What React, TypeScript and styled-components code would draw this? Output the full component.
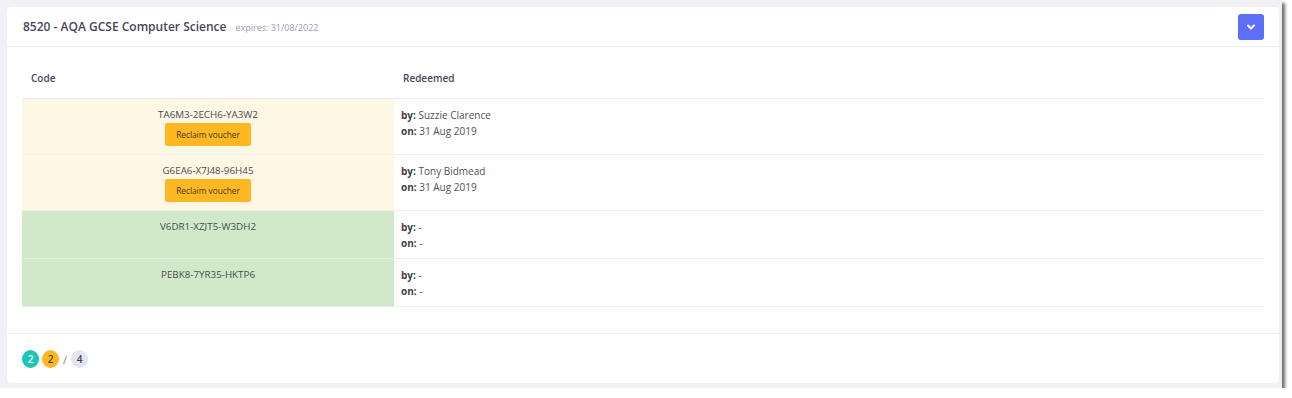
import React from 'react';
import styled, { createGlobalStyle } from 'styled-components';

const GlobalStyle = createGlobalStyle`
    html, body {
        margin: 0;
        padding: 0;
        background: #ffffff;
    }
    body {
        font-family: 'Open Sans', 'Noto Sans', Arial, sans-serif;
        color: #575962;
    }
`;

const Frame = styled.div`
    box-sizing: border-box;
    width: 1282px;
    height: 388px;
    padding: 7px 3px 5px 7px;
    background: #f0f0f6;
    box-shadow: 3px 3px 3px rgba(50, 50, 50, 0.7);
`;

const Card = styled.div`
    height: 100%;
    background: #ffffff;
    border-radius: 4px;
    display: flex;
    flex-direction: column;
`;

const CardHeader = styled.div`
    box-sizing: border-box;
    flex-shrink: 0;
    height: 40px;
    padding: 0 15px 0 16px;
    border-bottom: 1px solid #ebedf2;
    display: flex;
    align-items: center;
    justify-content: space-between;
`;

const TitleWrap = styled.div`
    display: flex;
    align-items: baseline;
    gap: 9px;
`;

const Title = styled.h3`
    margin: 0;
    font-size: 12px;
    font-weight: 600;
    color: #48465b;
`;

const Expires = styled.span`
    font-size: 9px;
    color: #9a9caf;
`;

const ToggleButton = styled.button`
    width: 26px;
    height: 26px;
    padding: 0;
    border: none;
    border-radius: 3px;
    background: #5d6ff7;
    display: flex;
    align-items: center;
    justify-content: center;
    cursor: pointer;
`;

const CardBody = styled.div`
    flex: 1;
    padding: 11px 15px 0;
`;

const Grid = styled.div`
    display: grid;
    grid-template-columns: 372px 1fr;
`;

const HeadCell = styled.div`
    padding: 12px 9px;
    line-height: 16px;
    font-size: 10px;
    font-weight: 600;
    color: #48465b;
    border-bottom: 1px solid #ebedf2;
`;

const CodeCell = styled.div<{ status: 'redeemed' | 'free' }>`
    padding: 8px 9px 8px;
    background: ${({ status }) => (status === 'redeemed' ? '#fdf7e3' : '#d1e9c8')};
    border-bottom: 1px solid ${({ status }) => (status === 'redeemed' ? '#eef0f2' : '#e3efe0')};
    display: flex;
    flex-direction: column;
    align-items: center;
    font-size: 9.8px;
    line-height: 16px;
    color: #4a4b54;
`;

const ReclaimButton = styled.button`
    height: 23px;
    padding: 0 11px;
    border: none;
    border-radius: 2px;
    background: #ffb822;
    color: #3b3720;
    font-family: inherit;
    font-size: 8.3px;
    cursor: pointer;
`;

const RedeemCell = styled.div`
    padding: 8px 7px 7px;
    border-bottom: 1px solid #ebedf2;
    font-size: 10px;
    line-height: 16px;
    color: #4f5059;
`;

const Label = styled.b`
    font-weight: 700;
    color: #3f4047;
`;

const CardFooter = styled.div`
    flex-shrink: 0;
    border-top: 1px solid #ebedf2;
    padding: 16px 15px 15px;
    display: flex;
    align-items: center;
    gap: 3px;
`;

const Badge = styled.span<{ tone: 'success' | 'warning' | 'muted' }>`
    width: 17px;
    height: 18px;
    border-radius: 50%;
    display: inline-flex;
    align-items: center;
    justify-content: center;
    font-size: 10px;
    font-weight: 600;
    background: ${({ tone }) =>
        tone === 'success' ? '#1dc5b8' : tone === 'warning' ? '#ffb822' : '#e4e5f0'};
    color: ${({ tone }) => (tone === 'success' ? '#ffffff' : '#3f4047')};
`;

const Slash = styled.span`
    font-size: 11px;
    color: #7b7e9a;
    margin: 0 1px;
`;

type Voucher = {
    code: string;
    by: string;
    on: string;
    redeemed: boolean;
};

const vouchers: Voucher[] = [
    { code: 'TA6M3-2ECH6-YA3W2', by: 'Suzzie Clarence', on: '31 Aug 2019', redeemed: true },
    { code: 'G6EA6-X7J48-96H45', by: 'Tony Bidmead', on: '31 Aug 2019', redeemed: true },
    { code: 'V6DR1-XZJT5-W3DH2', by: '-', on: '-', redeemed: false },
    { code: 'PEBK8-7YR35-HKTP6', by: '-', on: '-', redeemed: false },
];

const App: React.FC = () => {
    return (
        <>
            <GlobalStyle />
            <Frame>
                <Card>
                    <CardHeader>
                        <TitleWrap>
                            <Title>8520 - AQA GCSE Computer Science</Title>
                            <Expires>expires: 31/08/2022</Expires>
                        </TitleWrap>
                        <ToggleButton aria-label="Toggle">
                            <svg width="10" height="10" viewBox="0 0 10 10">
                                <polyline
                                    points="2,3.5 5,6.5 8,3.5"
                                    fill="none"
                                    stroke="#ffffff"
                                    strokeWidth="2"
                                    strokeLinecap="round"
                                    strokeLinejoin="round"
                                />
                            </svg>
                        </ToggleButton>
                    </CardHeader>
                    <CardBody>
                        <Grid>
                            <HeadCell>Code</HeadCell>
                            <HeadCell>Redeemed</HeadCell>
                            {vouchers.map((v) => (
                                <React.Fragment key={v.code}>
                                    <CodeCell status={v.redeemed ? 'redeemed' : 'free'}>
                                        <span>{v.code}</span>
                                        {v.redeemed && <ReclaimButton>Reclaim voucher</ReclaimButton>}
                                    </CodeCell>
                                    <RedeemCell>
                                        <div>
                                            <Label>by:</Label> {v.by}
                                        </div>
                                        <div>
                                            <Label>on:</Label> {v.on}
                                        </div>
                                    </RedeemCell>
                                </React.Fragment>
                            ))}
                        </Grid>
                    </CardBody>
                    <CardFooter>
                        <Badge tone="success">2</Badge>
                        <Badge tone="warning">2</Badge>
                        <Slash>/</Slash>
                        <Badge tone="muted">4</Badge>
                    </CardFooter>
                </Card>
            </Frame>
        </>
    );
};

export default App;
